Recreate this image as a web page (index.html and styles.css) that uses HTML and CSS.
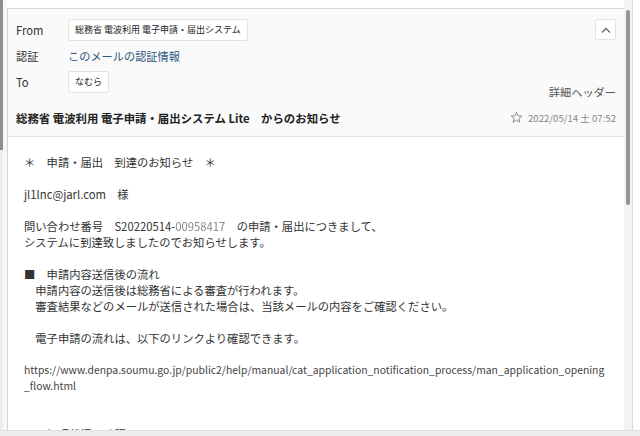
FILE: index.html
```html
<!DOCTYPE html>
<html lang="ja">
<head>
<meta charset="utf-8">
<title>メール</title>
<link rel="stylesheet" href="styles.css">
</head>
<body>
<div class="window">
  <div class="lscroll"><div class="lthumb"></div></div>
  <div class="gutter"></div>
  <div class="panel">
    <div class="header">
      <div class="fields">
        <div class="label">From</div>
        <div class="value"><span class="chip">総務省 電波利用 電子申請・届出システム</span></div>
        <div class="label">認証</div>
        <div class="value"><a class="auth">このメールの認証情報</a></div>
        <div class="label">To</div>
        <div class="value"><span class="chip">なむら</span></div>
      </div>
      <div class="side">
        <button class="collapse" aria-label="閉じる">
          <svg width="10" height="6" viewBox="0 0 10 6"><path d="M1 5.5 L5 1.5 L9 5.5" fill="none" stroke="#666" stroke-width="1.3"/></svg>
        </button>
        <a class="details">詳細ヘッダー</a>
      </div>
    </div>
    <div class="subject-row">
      <div class="subject">総務省 電波利用 電子申請・届出システム Lite　からのお知らせ</div>
      <div class="meta">
        <svg class="star" width="13" height="13" viewBox="0 0 24 24"><path d="M12 2.5 L14.8 9 L21.8 9.4 L16.4 13.9 L18.2 20.8 L12 17 L5.8 20.8 L7.6 13.9 L2.2 9.4 L9.2 9 Z" fill="none" stroke="#8a8a8a" stroke-width="1.8" stroke-linejoin="round"/></svg>
        <span class="date">2022/05/14 土 07:52</span>
      </div>
    </div>
    <div class="body">
      <p>＊　申請・届出　到達のお知らせ　＊</p>
      <p>jl1lnc@jarl.com　様</p>
      <p>問い合わせ番号　S20220514-<span class="redact">00958417</span>　の申請・届出につきまして、<br>システムに到達致しましたのでお知らせします。</p>
      <p>■　申請内容送信後の流れ<br>　申請内容の送信後は総務省による審査が行われます。<br>　審査結果などのメールが送信された場合は、当該メールの内容をご確認ください。</p>
      <p>　電子申請の流れは、以下のリンクより確認できます。</p>
      <p class="url">https://www.denpa.soumu.go.jp/public2/help/manual/cat_application_notification_process/man_application_opening<br>_flow.html</p>
      <p class="gap">■　処理状況の確認</p>
    </div>
  </div>
  <div class="rscroll"><div class="rthumb"></div></div>
  <div class="rline"></div>
  <div class="rpad"></div>
</div>
<div class="footer"></div>
</body>
</html>
```

FILE: styles.css
```css
html, body {
  margin: 0;
  padding: 0;
}
body {
  width: 640px;
  height: 436px;
  overflow: hidden;
  background: #fff;
  font-family: "Noto Sans CJK JP", "Noto Sans", sans-serif;
  color: #333;
}
.window {
  display: flex;
  height: 430px;
  overflow: hidden;
}
.lscroll {
  width: 3px;
  background: #ececec;
}
.lthumb {
  height: 150px;
  background: #8e8e8e;
}
.gutter {
  width: 4px;
  background: #f7f7f7;
}
.panel {
  width: 616px;
  margin-top: 8px;
  border-top: 1px solid #d9d9d9;
  border-left: 1px solid #d4d4d4;
  display: flex;
  flex-direction: column;
  overflow: hidden;
}
.header {
  flex-shrink: 0;
  background: #fafafa;
  display: flex;
  justify-content: space-between;
  padding: 10px 8px 0 8px;
  height: 78px;
}
.fields {
  display: grid;
  grid-template-columns: 52px auto;
  grid-template-rows: 22px 24px 22px;
  row-gap: 3px;
  align-items: center;
  align-content: start;
  font-size: 11.2px;
}
.label {
  color: #333;
}
.chip {
  display: inline-block;
  height: 20px;
  line-height: 20px;
  padding: 0 6px;
  background: #fff;
  border: 1px solid #e2e2e2;
  border-radius: 2px;
  font-size: 9px;
  color: #222;
}
.auth {
  color: #2c5680;
  font-size: 11.2px;
}
.side {
  display: flex;
  flex-direction: column;
  align-items: flex-end;
  justify-content: space-between;
}
.collapse {
  width: 21px;
  height: 21px;
  padding: 0;
  background: #fff;
  border: 1px solid #e2e2e2;
  border-radius: 2px;
  display: flex;
  align-items: center;
  justify-content: center;
}
.details {
  font-size: 11.2px;
  color: #555;
  line-height: 14px;
  margin-bottom: -2px;
}
.subject-row {
  flex-shrink: 0;
  background: #fafafa;
  border-bottom: 1px solid #e2e2e2;
  display: flex;
  align-items: center;
  justify-content: space-between;
  box-sizing: border-box;
  height: 40px;
  padding: 8px 8px 6px 8px;
}
.subject {
  font-size: 11.4px;
  font-weight: bold;
  color: #222;
}
.meta {
  display: flex;
  align-items: center;
  gap: 5px;
}
.date {
  font-size: 9.6px;
  color: #888;
}
.body {
  flex-shrink: 0;
  padding: 17px 16px 0 16px;
  font-size: 11.3px;
  line-height: 16px;
  color: #333;
}
.body p {
  margin: 0 0 16px 0;
}
.redact {
  color: #888;
  filter: blur(0.6px);
}
.url {
  color: #444;
  font-size: 10.4px;
}
.body p.gap {
  margin-top: 32px;
}
.rscroll {
  width: 8px;
  background: #f3f3f3;
  display: flex;
  justify-content: center;
}
.rthumb {
  width: 4px;
  height: 195px;
  margin-top: 10px;
  background: #969696;
  border-radius: 2px;
}
.rline {
  width: 1px;
  background: #dadada;
}
.rpad {
  width: 7px;
  background: #fff;
}
.footer {
  height: 6px;
  background: #ececec;
  border-top: 1px solid #e0e0e0;
}
```
